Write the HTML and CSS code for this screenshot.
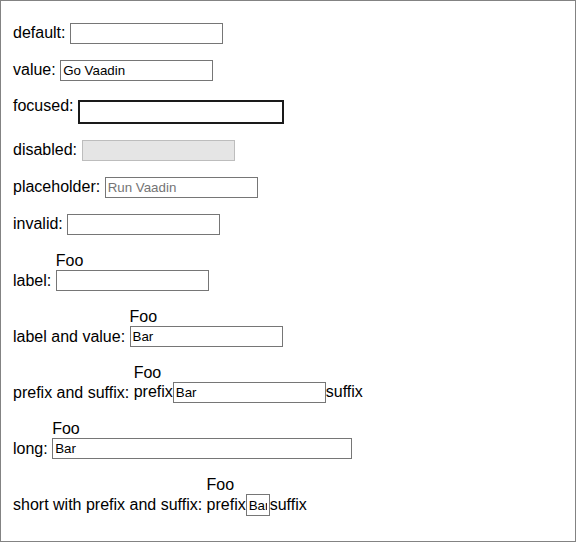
FILE: index.html
```html
<!DOCTYPE html>
<html>
<head>
<meta charset="utf-8">
<link rel="stylesheet" href="styles.css">
</head>
<body>
<div class="frame">
  <div class="row">default: <input class="tf" type="text"></div>
  <div class="row">value: <input class="tf" type="text" value="Go Vaadin"></div>
  <div class="row">focused: <input class="tf focused" type="text"></div>
  <div class="row">disabled: <input class="tf" type="text" disabled></div>
  <div class="row">placeholder: <input class="tf" type="text" placeholder="Run Vaadin"></div>
  <div class="row">invalid: <input class="tf" type="text"></div>
  <div class="row">label: <span class="field"><span class="lbl">Foo</span><input class="tf" type="text"></span></div>
  <div class="row">label and value: <span class="field"><span class="lbl">Foo</span><input class="tf" type="text" value="Bar"></span></div>
  <div class="row">prefix and suffix: <span class="field"><span class="lbl">Foo</span>prefix<input class="tf" type="text" value="Bar">suffix</span></div>
  <div class="row">long: <span class="field"><span class="lbl">Foo</span><input class="tf long" type="text" value="Bar"></span></div>
  <div class="row">short with prefix and suffix: <span class="field"><span class="lbl">Foo</span>prefix<input class="tf short" type="text" value="Bar">suffix</span></div>
</div>
</body>
</html>
```
FILE: styles.css
```css
html, body {
  margin: 0;
  padding: 0;
  background: #fff;
}

.frame {
  box-sizing: border-box;
  width: 576px;
  height: 542px;
  border: 1px solid #838383;
  padding: 22px 12px 0 12px;
  display: flex;
  flex-direction: column;
  gap: 16.2px;
  font-family: "Liberation Sans", Arial, sans-serif;
  font-size: 16px;
  color: #000;
}

.row {
  white-space: nowrap;
}

.field {
  display: inline-block;
}

.lbl {
  display: block;
  line-height: 18.8px;
}

.tf {
  box-sizing: border-box;
  width: 153px;
  height: 21px;
  margin: 0;
  padding: 1px 2px;
  border: 1px solid #767676;
  border-radius: 0;
  background: #fff;
  font-family: "Liberation Sans", Arial, sans-serif;
  font-size: 13.333px;
  color: #000;
  outline: none;
}

.tf::placeholder {
  color: #757575;
  opacity: 1;
}

.tf:disabled {
  background: #e5e5e5;
  border-color: #bdbdbd;
}

.tf.focused {
  width: 206px;
  height: 24px;
  border: 2px solid #1a1a1a;
  vertical-align: -5px;
}

.tf.long {
  width: 300px;
}

.tf.short {
  width: 24px;
  height: 22px;
}
```
